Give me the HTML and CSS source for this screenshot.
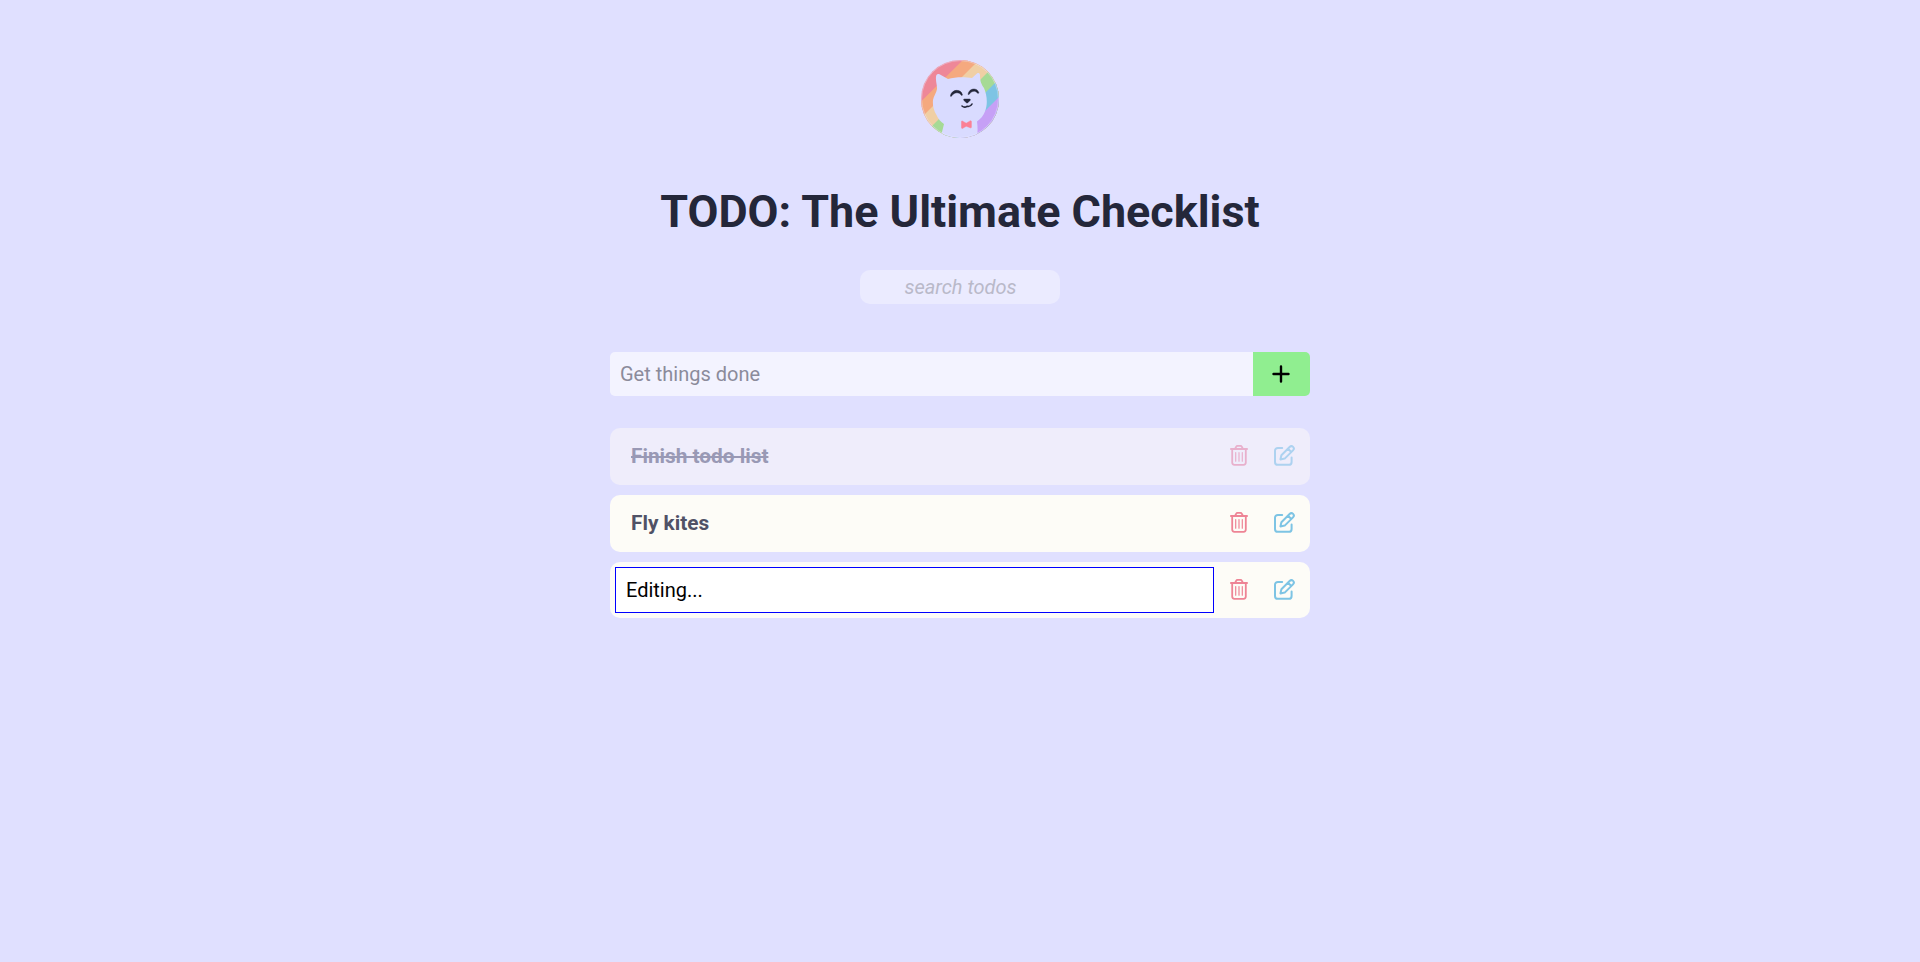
FILE: index.html
```html
<!DOCTYPE html>
<html lang="en">
<head>
<meta charset="utf-8">
<title>TODO: The Ultimate Checklist</title>
<link rel="stylesheet" href="styles.css">
</head>
<body>
<svg class="sprite" width="0" height="0">
  <symbol id="trash" viewBox="0 0 18 21">
    <g fill="none" stroke="currentColor" stroke-linecap="round" stroke-linejoin="round">
      <path stroke-width="1.800" d="M.9 4h16.200M2.200 4v13.600c0 1.400.8 2.200 2.200 2.200h9.200c1.400 0 2.200-.8 2.200-2.200V4M5 4l1.100-2.200c.3-.6.8-.9 1.400-.9h3c.6 0 1.100.3 1.400.9L13 4"/>
      <path stroke-width="1.200" d="M5.700 7.500v8.700M9 7.500v8.700M12.300 7.500v8.700"/>
    </g>
  </symbol>
  <symbol id="edit" viewBox="0 0 21 21">
    <g fill="none" stroke="currentColor" stroke-width="2" stroke-linecap="round" stroke-linejoin="round">
      <path d="M8.200 2.900H3.900C2.200 2.900 1 4.100 1 5.800v11.100c0 1.700 1.200 2.900 2.900 2.900h10.800c1.700 0 2.900-1.200 2.900-2.900v-4.300"/>
      <path d="M6.400 14.400l1-4.200 8.200-8.200c1.100-1.100 2.500-1.100 3.500-.1s1 2.400-.1 3.500l-8.300 8.200zM14 3.700l3.300 3.300"/>
    </g>
  </symbol>
</svg>
<main class="app">
  <svg class="logo" viewBox="0 0 78 78">
    <defs><clipPath id="disc"><circle cx="39" cy="39" r="39"/></clipPath></defs>
    <g clip-path="url(#disc)">
      <rect width="78" height="78" fill="#ee8798"/>
      <path fill="#f5a97f" d="M-2 43.500L45-3h40v84H-2z"/>
      <path fill="#f0cfa4" d="M-2 60L61-3h24v84H-2z"/>
      <path fill="#a6da95" d="M-2 81L82-3h4v84H-2z"/>
      <path fill="#7dc4e4" d="M16 81L84 13v68z"/>
      <path fill="#c6a0f6" d="M34 81l50-50v50z"/>
      <path fill="#a6da95" d="M-2 79L28 49v32H-2z"/>
      <path fill="#d9dbff" d="M20.500 80V74l2.500-10c-3-2-6-5-7.500-9C12.500 50 11.500 45 12 40c.5-4 3.500-7 4-11 .2-4-1.500-8-1-12 .3-3 1.500-3.500 4-2.500l8 4.500c7-2.200 17-2.200 24-1l5-4.500c2-1 3 0 3 2 0 6 1.500 9 4 12.500 3 7 4 16 1 23.500-1.500 4-4 7-8 10 .8 6 .9 12-.5 18.500z"/>
      <g fill="#24273a" stroke="#24273a" stroke-width=".4">
        <path d="M29.400 36c1-7 10.500-7.500 12-1.500.2 1.200-.8 1.300-1.300.5-2-3-6.500-3-9 .5-.7.900-1.600 1.200-1.700.5z"/>
        <path d="M47 34.200c1-6.200 9-7 10.800-1.800.2 1.200-.9 1.200-1.500.5-2-2.300-5-2.200-7.600.8-.7.900-1.600 1.200-1.700.5z"/>
        <path d="M43.500 39h5c1 0 1.200.8.6 1.400l-2.300 2.400c-.5.400-1 .3-1.400 0l-2.500-2.400c-.6-.6-.4-1.400.6-1.400z"/>
      </g>
      <path fill="none" stroke="#24273a" stroke-width="1.600" stroke-linecap="round" d="M41 46q2.500 2.200 5 .3q3.500.8 5-2.300"/>
      <path fill="#fb8095" stroke="#fb8095" stroke-width=".5" d="M41.200 61l4 2.200 4-2.300c.8-.3 1.200 0 1.200.8v5.300c0 .8-.5 1-1.200.7l-4-1.500-3.500 2.100c-.8.400-1.200 0-1.200-.8v-5.700c0-.8.200-1 .7-.8z"/>
    </g>
    <circle cx="39" cy="39" r="38.400" fill="none" stroke="#e8e8ff" stroke-opacity=".4"/>
  </svg>
  <h1 class="title">TODO: The Ultimate Checklist</h1>
  <input class="search" type="text" placeholder="search todos">
  <form class="add">
    <input class="add-input" type="text" placeholder="Get things done">
    <button class="add-button" type="button" aria-label="Add"><svg class="plus" viewBox="0 0 18 18"><path d="M9 1.500v15M1.500 9h15"/></svg></button>
  </form>
  <ul class="list">
    <li class="item done"><span class="text">Finish todo list</span><svg class="trash"><use href="#trash"/></svg><svg class="edit"><use href="#edit"/></svg></li>
    <li class="item"><span class="text">Fly kites</span><svg class="trash"><use href="#trash"/></svg><svg class="edit"><use href="#edit"/></svg></li>
    <li class="item editing"><input class="edit-input" type="text" value="Editing..."><svg class="trash"><use href="#trash"/></svg><svg class="edit"><use href="#edit"/></svg></li>
  </ul>
</main>
</body>
</html>
```
FILE: styles.css
```css
* { box-sizing: border-box; }
body { margin: 0; background: #e0e0ff; font: 20px Roboto, sans-serif; color: #24273a; }
input, button { font: inherit; border: 0; outline: 0; margin: 0; }
.sprite { display: block; }
.app { width: 700px; margin: 0 auto; padding-top: 59.5px; display: flex; flex-direction: column; align-items: center; }
.logo { width: 78px; height: 78px; }
.title { margin: 47.5px 0 32px; font-size: 44.9px; line-height: 53px; font-weight: 700; white-space: nowrap; }
.search { width: 200px; height: 34px; padding: 0 0 0 1px; border-radius: 10px; background: #ebebff; text-align: center; font-style: italic; }
.search::placeholder { color: #b9b9c9; }
.add { display: flex; width: 100%; height: 44px; margin: 48px 0 32px; border-radius: 5px; overflow: hidden; }
.add-input { flex: 1; padding: 0 10px; background: #f3f3ff; }
.add-input::placeholder { color: #8b8b9b; }
.add-button { width: 57px; padding: 0 .6px 0 0; display: flex; align-items: center; justify-content: center; background: #90ee90; }
.plus { width: 18px; height: 18px; fill: none; stroke: #000; stroke-width: 2.4; stroke-linecap: round; }
.list { width: 100%; margin: 0; padding: 0; list-style: none; display: flex; flex-direction: column; gap: 10px; }
.item { display: flex; align-items: center; height: 57px; padding: 0 15px 2px 21px; border-radius: 10px; background: #fdfcf7; }
.text { flex: 1; font-size: 20.8px; font-weight: 700; color: #505266; }
.done { background: #efedfb; }
.done .text { color: #9999b5; text-decoration: line-through; }
.done .trash { color: #e8b0cc; }
.done .edit { color: #add2f0; }
.editing { height: 56px; padding: 0 15px 0 5px; }
.editing .trash, .editing .edit { margin-bottom: 1px; }
.edit-input { flex: 1; height: 46px; margin-right: 15.5px; padding: 0 10px; border: 1px solid #00f; background: #fff; color: #000; }
.trash { width: 18px; height: 21px; margin-right: 26px; color: #ee8495; }
.edit { width: 21px; height: 21px; margin-right: .5px; color: #7dc4e4; }
```
